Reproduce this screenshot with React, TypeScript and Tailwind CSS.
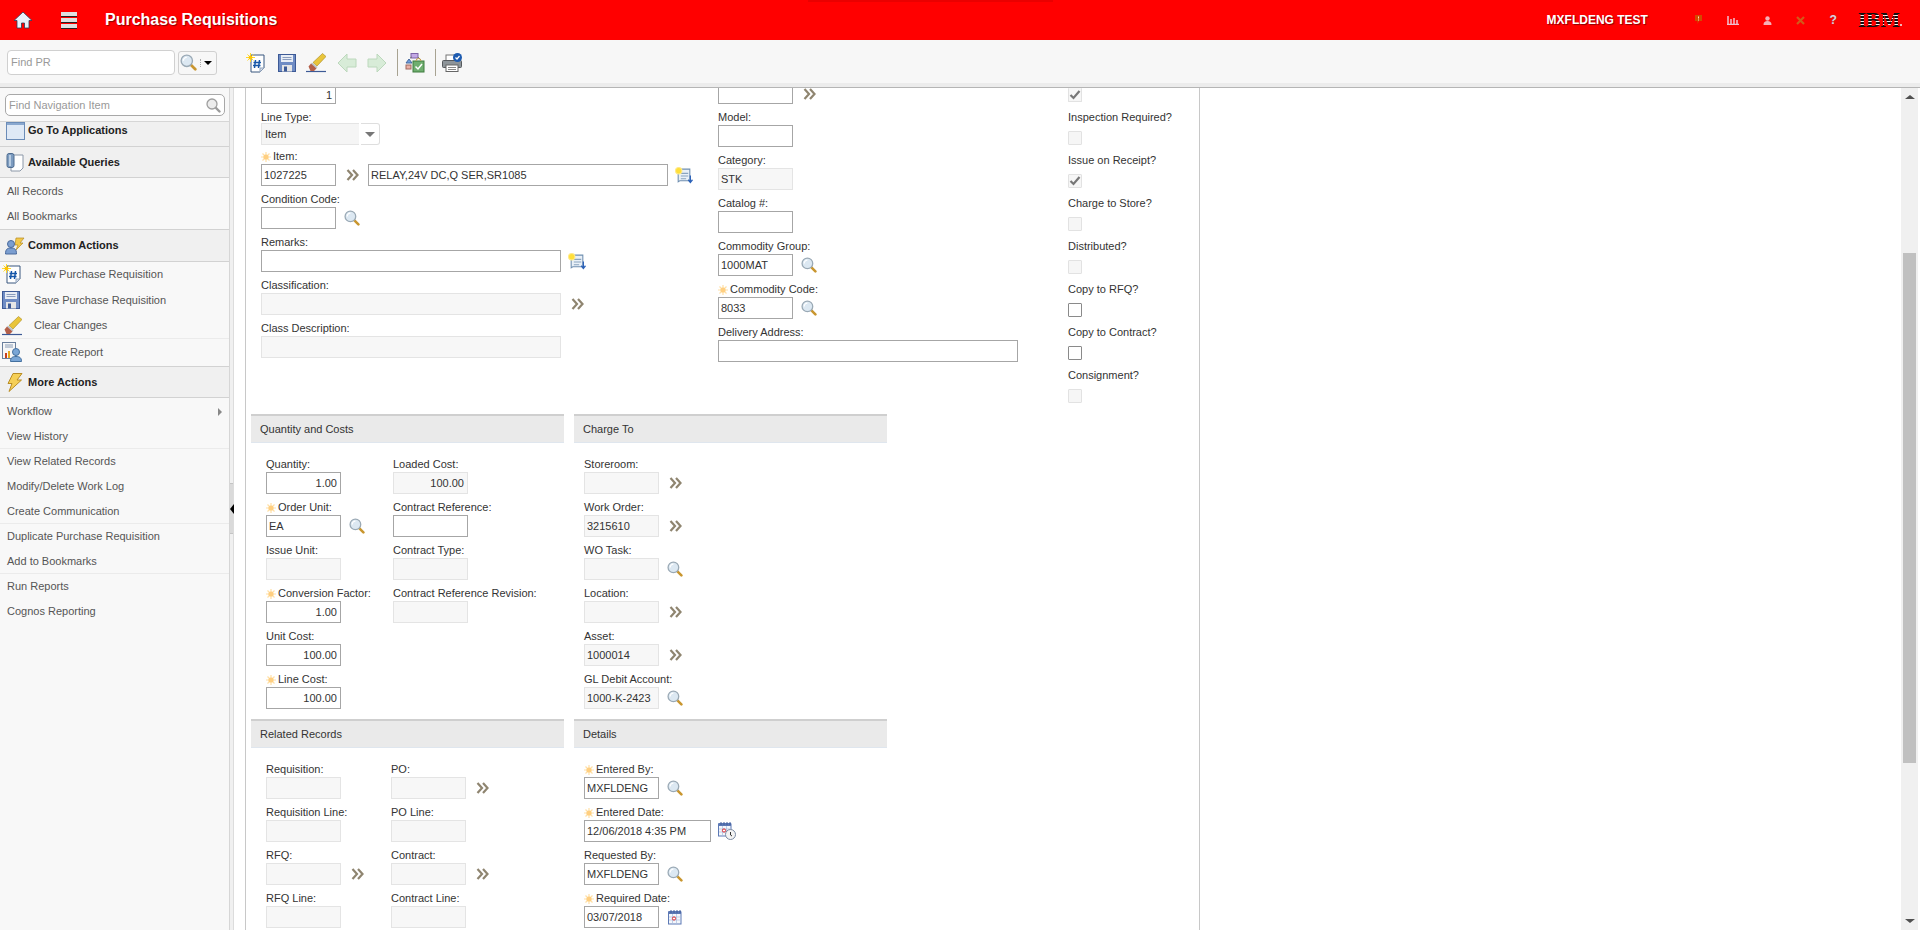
import type { ReactNode } from 'react'

const Star = () => (
  <svg width="10" height="10" viewBox="0 0 10 10" className="mr-[2px] shrink-0">
    <g stroke="#ffe0a6" strokeWidth="1.2">
      <path d="M5 0v10M0 5h10M1.5 1.5l7 7M8.5 1.5l-7 7" />
    </g>
    <circle cx="5" cy="5" r="2.6" fill="#ffcf80" />
  </svg>
)

const Arrows = () => (
  <svg width="13" height="12" viewBox="0 0 13 12" fill="none" stroke="#8f8570" strokeWidth="2.2">
    <path d="M1.5 1l4.5 5-4.5 5M7 1l4.5 5L7 11" />
  </svg>
)

const Magnifier = ({ size = 16 }: { size?: number }) => (
  <svg width={size} height={size} viewBox="0 0 15 15">
    <path d="M9.5 9.5l4 4" stroke="#c9962f" strokeWidth="2.4" strokeLinecap="round" />
    <circle cx="6" cy="6" r="5" fill="#dce8f2" stroke="#9aa9b5" strokeWidth="1.2" />
    <path d="M3 6a3 3 0 0 1 3-3" stroke="#fff" strokeWidth="1.2" fill="none" />
  </svg>
)

const GrayMagnifier = () => (
  <svg width="15" height="15" viewBox="0 0 15 15">
    <path d="M9.5 9.5l4 4" stroke="#9a9a9a" strokeWidth="2.4" strokeLinecap="round" />
    <circle cx="6" cy="6" r="5" fill="#ececec" stroke="#9f9f9f" strokeWidth="1.3" />
  </svg>
)

const LongDesc = () => (
  <svg width="18" height="17" viewBox="0 0 17 16">
    <path d="M3 2h11v11H4.5L3 14z" fill="#e9f0f7" stroke="#6f8fb0" />
    <path d="M5.500 6h7M5.500 8.500h7M5.500 11h5" stroke="#8aa4bf" />
    <path d="M14.500 8v6M12.500 12l2 2.500 2-2.500" stroke="#2c62b8" fill="none" strokeWidth="1.2" />
    <circle cx="3.500" cy="3.500" r="3" fill="#ffdf3a" stroke="#ffe98a" />
  </svg>
)

const Calendar = ({ clock }: { clock?: boolean }) => (
  <svg width={clock ? 18 : 14} height={clock ? 18 : 15} viewBox={clock ? '0 0 18 18' : '0 0 14 15'}>
    <rect x="0.5" y="2" width="12.5" height="12" fill="#f4f7fc" stroke="#5d79b5" />
    <rect x="0.5" y="1" width="12.5" height="3" fill="#5d79b5" />
    <path d="M3 0v3M6 0v3M9 0v3M12 0v3" stroke="#3f5c9c" />
    <path d="M1 7h12M1 10h12M4.5 4v10M8.5 4v10" stroke="#a9bbdc" strokeWidth="0.7" />
    <circle cx="6" cy="8.5" r="1.6" fill="#fff" stroke="#d8232a" />
    {clock && (
      <g>
        <circle cx="12.5" cy="12.5" r="5" fill="#f3f3f3" stroke="#7b8ba3" />
        <path d="M12.5 10v3l1.5 1" stroke="#333" fill="none" />
      </g>
    )}
  </svg>
)

const NewDoc = ({ size = 20 }: { size?: number }) => (
  <svg width={size} height={size} viewBox="0 0 20 20">
    <path d="M5 2h13v13l-4 4H5z" fill="#fff" stroke="#39577f" />
    <path d="M18 15h-4v4" fill="#d5dde8" stroke="#8fa2bb" />
    <path d="M9.5 7l-1 8M13.5 7l-1 8M7.5 9.5h7.5M7 12.5h7.5" stroke="#1556a8" strokeWidth="1.5" />
    <path d="M4.5 0v9M0 4.500h9M1.500 1.500l6 6M7.500 1.500l-6 6" stroke="#ffd92e" />
    <circle cx="4.500" cy="4.500" r="2" fill="#ffc400" />
  </svg>
)

const Floppy = ({ size = 18 }: { size?: number }) => (
  <svg width={size} height={size} viewBox="0 0 18 18">
    <rect x="0.500" y="0.500" width="17" height="17" fill="#6f8cc4" stroke="#3d5a96" />
    <rect x="3" y="1" width="12" height="7" fill="#e8edf5" />
    <path d="M4.500 3.500h9M4.500 5.500h9" stroke="#8a9cbd" />
    <rect x="4" y="11" width="10" height="6.500" fill="#e6e6e6" />
    <rect x="6" y="12.500" width="3" height="5" fill="#3d5a96" />
  </svg>
)

const Eraser = ({ size = 20 }: { size?: number }) => (
  <svg width={size} height={size} viewBox="0 0 20 20">
    <path d="M0 18.500h20" stroke="#3d5a96" strokeWidth="1.2" />
    <path d="M7 9.500L16.500 0.500 20 3.500 11 13z" fill="#e9c53b" stroke="#a88a1f" strokeWidth="0.6" />
    <path d="M6 9.500l5.500 4.500-1 1.500L5 11z" fill="#b9c4cc" />
    <path d="M2.500 13.500L5 10.500l5.500 5-2.500 2.500H4.500z" fill="#b4604a" />
  </svg>
)

const PageArrow = ({ dir }: { dir: 'left' | 'right' }) => (
  <svg width="20" height="20" viewBox="0 0 20 20">
    <path
      d={dir === 'left' ? 'M1 10L10 1v5h9v8h-9v5z' : 'M19 10l-9-9v5H1v8h9v5z'}
      fill="#d8ecd8"
      stroke="#bcd8bc"
    />
  </svg>
)

const RouteIcon = () => (
  <svg width="20" height="20" viewBox="0 0 20 20">
    <rect x="6" y="0.500" width="7" height="4.500" fill="#c3a9e6" stroke="#7e63a8" />
    <path d="M1 10l3-4 3 4z" fill="#6f9fe0" stroke="#46699e" />
    <rect x="1" y="12" width="5" height="4" fill="#e9b1a8" stroke="#a0695f" />
    <path d="M5 5l2-1M13 4l3 3" stroke="#777" fill="none" />
    <rect x="8" y="8" width="11" height="11" fill="#6fae6f" stroke="#3f7d3f" />
    <path d="M10.500 13.500l2.500 2.500 4-5" stroke="#fff" strokeWidth="1.5" fill="none" />
    <path d="M11 8a2.500 2.500 0 0 1 5 0" stroke="#c9a24a" fill="none" />
  </svg>
)

const PrintIcon = () => (
  <svg width="21" height="20" viewBox="0 0 21 20">
    <rect x="4" y="2" width="11" height="6" fill="#fff" stroke="#777" />
    <rect x="0.500" y="7.500" width="19" height="7" rx="1" fill="#8d9499" stroke="#55595d" />
    <rect x="4" y="12" width="12" height="6.500" fill="#fff" stroke="#666" />
    <path d="M6 14.500h8M6 16.500h8" stroke="#888" />
    <circle cx="15.500" cy="4.500" r="4.500" fill="#1d5bb0" />
    <path d="M13.500 4.500l1.500 1.500 2.500-3" stroke="#fff" strokeWidth="1.2" fill="none" />
  </svg>
)

const QueriesIcon = () => (
  <svg width="18" height="19" viewBox="0 0 18 19">
    <path d="M5 2h12v13l-3 3H5z" fill="#fff" stroke="#8c98a8" />
    <rect x="1" y="0.500" width="7" height="14" rx="2" fill="#7d9cc0" stroke="#4e6c90" />
    <rect x="3" y="2" width="2" height="11" fill="#b9cde2" />
  </svg>
)

const PeopleBolt = () => (
  <svg width="20" height="18" viewBox="0 0 20 18">
    <path d="M11 1h8l-4 5h3l-7 7 2-5h-3z" fill="#f2c84b" stroke="#b58a21" strokeWidth="0.7" />
    <circle cx="6" cy="7" r="3.500" fill="#7b9ed0" stroke="#4a6a9c" />
    <path d="M0.500 17c0-5 2-6 5.500-6s5.500 1 5.500 6z" fill="#7b9ed0" stroke="#4a6a9c" />
  </svg>
)

const Bolt = () => (
  <svg width="16" height="19" viewBox="0 0 16 19">
    <path d="M6 0.500h9L10 7h4.500L2 18.500l3-8H1z" fill="#f5cf57" stroke="#b98d25" />
  </svg>
)

const ReportIcon = () => (
  <svg width="20" height="20" viewBox="0 0 20 20">
    <rect x="0.500" y="0.500" width="13" height="16" fill="#f7f7f7" stroke="#6a7f9c" />
    <path d="M3 3h8M3 5h8" stroke="#8a9cb5" />
    <rect x="3" y="11" width="2" height="5" fill="#c8401f" />
    <rect x="6" y="9" width="2" height="7" fill="#e8a820" />
    <circle cx="14" cy="10" r="3.500" fill="#7aa6d6" stroke="#44709f" />
    <path d="M8.500 19.500c0-4 2-5 5.500-5s5.500 1 5.500 5z" fill="#7aa6d6" stroke="#44709f" />
  </svg>
)

const AppWindow = () => (
  <svg width="19" height="18" viewBox="0 0 19 18">
    <rect x="0.500" y="0.500" width="18" height="17" fill="#dfe9f6" stroke="#6b8cb8" />
    <rect x="1" y="1" width="17" height="2" fill="#8aa8cf" />
  </svg>
)

type FieldProps = {
  label: string
  value?: string
  width?: string
  required?: boolean
  right?: boolean
  readOnly?: boolean
  icon?: ReactNode
  labelClass?: string
}

function Box({ value, width = 'w-[75px]', right, readOnly, extra = 'h-[22px]' }: { value?: string; width?: string; right?: boolean; readOnly?: boolean; extra?: string }) {
  return (
    <div
      className={`${width} ${extra} shrink-0 flex items-center border pt-[1px] text-[11px] text-[#333] ${right ? 'justify-end pr-[3px]' : 'pl-[2px]'} ${readOnly ? 'border-[#e4e4e4] bg-[#f7f7f7]' : 'border-[#a6a6a6] bg-white'}`}
    >
      {value}
    </div>
  )
}

function Field({ label, value, width, required, right, readOnly, icon, labelClass = 'h-[21px] pb-[1px]' }: FieldProps) {
  return (
    <div>
      <div className={`flex items-end text-[11px] leading-[13px] text-[#333] whitespace-nowrap ${labelClass}`}>
        {required && <span className="mb-[1.5px]"><Star /></span>}
        {label}
      </div>
      <div className="flex items-center h-[22px]">
        <Box value={value} width={width} right={right} readOnly={readOnly} />
        {icon && <div className="w-[32px] flex justify-center shrink-0">{icon}</div>}
      </div>
    </div>
  )
}

function Check({ label, checked, editable }: { label: string; checked?: boolean; editable?: boolean }) {
  return (
    <div>
      <div className="flex items-end h-[21px] pb-[1px] text-[11px] leading-[13px] text-[#333] whitespace-nowrap">{label}</div>
      <div className="h-[22px] pt-[6px]">
        <CheckBox checked={checked} editable={editable} />
      </div>
    </div>
  )
}

function CheckBox({ checked, editable, clipped }: { checked?: boolean; editable?: boolean; clipped?: boolean }) {
  return (
    <div
      className={`w-[14px] h-[14px] flex items-center justify-center border rounded-[1px] ${clipped ? 'border-t-0' : ''} ${editable ? 'border-[#8a8a8a] bg-white' : 'border-[#e2e2e2] bg-[#f6f6f6]'}`}
    >
      {checked && (
        <svg width="12" height="10" viewBox="0 0 12 10" fill="none" stroke="#777" strokeWidth="2.2">
          <path d="M1.500 5l3 3 6-7" />
        </svg>
      )}
    </div>
  )
}

function SectionHead({ title }: { title: string }) {
  return (
    <div className="w-[313px] h-[29px] pl-[9px] flex items-center border-t-2 border-b border-t-[#cfcfcf] border-b-[#dfe6ee] bg-[#eaeaea] text-[11px] text-[#333]">
      {title}
    </div>
  )
}

function NavHead({ icon, title, cls }: { icon: ReactNode; title: string; cls: string }) {
  return (
    <div className={`flex items-center border-b border-[#d2d2d2] bg-[#f0f0f0] text-[11px] font-bold text-[#222] ${cls}`}>
      <div className="w-[28px] flex justify-center shrink-0 pl-[2px]">{icon}</div>
      {title}
    </div>
  )
}

function NavLink({ label, line, arrow }: { label: string; line?: boolean; arrow?: boolean }) {
  return (
    <div className={`h-[25px] pl-[7px] pr-[7px] flex items-center justify-between text-[11px] text-[#555] ${line ? 'border-b border-[#ebebeb]' : ''}`}>
      {label}
      {arrow && <span className="w-0 h-0 border-y-[4px] border-l-[4px] border-y-transparent border-l-[#888]" />}
    </div>
  )
}

function ActionLink({ icon, label, line }: { icon: ReactNode; label: string; line?: boolean }) {
  return (
    <div className={`h-[26px] flex items-center text-[11px] text-[#555] ${line ? 'border-b border-[#ebebeb]' : ''}`}>
      <div className="w-[34px] pl-[2px] shrink-0">{icon}</div>
      {label}
    </div>
  )
}

export default function App() {
  return (
    <div className="w-[1920px] h-[930px] overflow-hidden flex flex-col bg-white font-['Liberation_Sans',Arial,sans-serif]">
      <header className="relative h-[40px] shrink-0 bg-[#ff0000] flex items-center text-white">
        <div className="absolute left-[808px] top-0 w-[245px] h-[2px] bg-[#ea0000]" />
        <div className="w-[46px] pl-[13px]">
          <svg width="20" height="20" viewBox="0 0 20 20">
            <path d="M10 2L1 10.500h3V18h4.500v-5h3v5H16v-7.500h3z" fill="#eaf2fb" stroke="#2b3f5a" strokeWidth="0.8" />
          </svg>
        </div>
        <div className="ml-[15px] w-[16px] flex flex-col gap-[1px]">
          <span className="h-[5px] bg-[#e0e0e0] border-b border-[#222]" />
          <span className="h-[5px] bg-[#e0e0e0] border-b border-[#222]" />
          <span className="h-[5px] bg-[#e0e0e0] border-b border-[#222]" />
        </div>
        <div className="ml-[28px] text-[16px] font-bold [text-shadow:1px_1px_1px_#8a0000]">Purchase Requisitions</div>
        <div className="ml-auto text-[12px] font-bold [text-shadow:1px_1px_1px_#8a0000]">MXFLDENG TEST</div>
        <div className="ml-[46px] flex items-center w-[143px] justify-between">
          <svg width="9" height="10" viewBox="0 0 9 10">
            <path d="M1 0h7v6H5L3.500 9V6H1z" fill="#d24a00" />
            <path d="M4.500 1.500v2M4.500 4.500v1" stroke="#ffe0c0" />
          </svg>
          <svg width="12" height="9" viewBox="0 0 12 9" stroke="#f0c0d0" strokeWidth="1.500">
            <path d="M1 0v8M4 3v5M7 2v6M10 4v4M0 8.500h12" />
          </svg>
          <svg width="9" height="9" viewBox="0 0 9 9" fill="#f5b0b8">
            <circle cx="4.500" cy="2.500" r="2.200" />
            <path d="M0.500 9c0-3 1.500-4 4-4s4 1 4 4z" />
          </svg>
          <svg width="9" height="9" viewBox="0 0 9 9" stroke="#d25a1a" strokeWidth="2.200">
            <path d="M1 1l7 7M8 1L1 8" />
          </svg>
          <span className="text-[12px] font-bold text-[#e8c8e0] [text-shadow:0_0_1px_#663]">?</span>
        </div>
        <div className="ml-[21px] mr-[18px] flex items-end">
          <div className="text-[18px] leading-[17px] font-bold tracking-[-0.5px] font-['DejaVu_Serif',serif] text-transparent bg-clip-text bg-[repeating-linear-gradient(180deg,#f4f4f4_0px,#f4f4f4_1px,#111_1px,#111_3px)]">
            IBM
          </div>
          <span className="mb-[3px] w-[2px] h-[2px] rounded-full bg-[#eee]" />
        </div>
      </header>

      <div className="h-[48px] shrink-0 bg-[#f7f7f7] border-b border-[#b5b5b5]">
        <div className="h-[43px] pt-[2px] flex items-center">
          <div className="ml-[7px] w-[168px] h-[25px] pl-[3px] flex items-center rounded-[4px] border border-[#d0d0d0] bg-white text-[11px] text-[#999]">Find PR</div>
          <div className="ml-[3px] w-[39px] h-[24px] flex items-center rounded-[3px] border border-[#d0d0d0] pl-[1px]">
            <Magnifier size={17} />
            <span className="ml-[3px] h-[8px] border-l border-dotted border-[#aaa]" />
            <span className="ml-[3px] w-0 h-0 border-x-[4px] border-t-[4px] border-x-transparent border-t-black" />
          </div>
          <div className="ml-[29px] mt-[1px] w-[20px]"><NewDoc /></div>
          <div className="ml-[12px] mt-[1px]"><Floppy /></div>
          <div className="ml-[10px] mt-[1px]"><Eraser /></div>
          <div className="ml-[11px] mt-[1px]"><PageArrow dir="left" /></div>
          <div className="ml-[10px] mt-[1px]"><PageArrow dir="right" /></div>
          <span className="ml-[10px] h-[27px] border-l border-[#a8a392]" />
          <div className="ml-[7px] mt-[1px]"><RouteIcon /></div>
          <span className="ml-[10px] h-[27px] border-l border-[#a8a392]" />
          <div className="ml-[6px] mt-[1px]"><PrintIcon /></div>
        </div>
        <div className="h-[4px] bg-[#ececec]" />
      </div>

      <div className="flex-1 flex min-h-0">
        <aside className="relative w-[234px] shrink-0 flex border-r-0">
          <div className="w-[230px] bg-[#f8f8f8] border-r border-[#d6d6d6] flex flex-col">
            <div className="h-[34px] shrink-0 pt-[6px] pl-[5px] border-b border-[#d6d6d6]">
              <div className="w-[220px] h-[22px] pl-[3px] pr-[3px] flex items-center justify-between rounded-[5px] border border-[#a8a8a8] bg-white text-[11px] text-[#999]">
                Find Navigation Item
                <GrayMagnifier />
              </div>
            </div>
            <NavHead cls="h-[25px] pb-[7px]" icon={<AppWindow />} title="Go To Applications" />
            <NavHead cls="h-[31px]" icon={<QueriesIcon />} title="Available Queries" />
            <div className="h-[52px] pt-[1px] border-b border-[#d2d2d2]">
              <NavLink label="All Records" />
              <NavLink label="All Bookmarks" />
            </div>
            <NavHead cls="h-[32px]" icon={<PeopleBolt />} title="Common Actions" />
            <div className="-mt-[1px]">
              <ActionLink icon={<NewDoc />} label="New Purchase Requisition" />
              <ActionLink icon={<Floppy />} label="Save Purchase Requisition" />
              <ActionLink icon={<Eraser />} label="Clear Changes" line />
              <ActionLink icon={<ReportIcon />} label="Create Report" />
            </div>
            <div className="mt-[1px] h-[1px] bg-[#d2d2d2]" />
            <NavHead cls="h-[31px]" icon={<Bolt />} title="More Actions" />
            <div className="pt-[1px]">
              <NavLink label="Workflow" arrow />
              <NavLink label="View History" line />
              <NavLink label="View Related Records" />
              <NavLink label="Modify/Delete Work Log" />
              <NavLink label="Create Communication" line />
              <NavLink label="Duplicate Purchase Requisition" />
              <NavLink label="Add to Bookmarks" line />
              <NavLink label="Run Reports" />
              <NavLink label="Cognos Reporting" />
            </div>
          </div>
          <div className="w-[4px] bg-[#f0f0f0] border-r border-[#dcdcdc] pt-[395px]">
            <div className="relative h-[51px] bg-[#dadada] border-y border-[#c4c4c4]">
              <span className="absolute left-0 top-[20px] w-0 h-0 border-y-[5px] border-r-[4px] border-y-transparent border-r-black" />
            </div>
          </div>
        </aside>

        <main className="flex-1 flex min-w-0">
          <div className="ml-[11px] w-[955px] shrink-0 border-x border-[#c8c8c8] overflow-hidden">
            <div className="h-[326px] flex">
              <div className="ml-[15px] w-[457px]">
                <div className="h-[16px]">
                  <div className="w-[75px] h-[16px] pr-[3px] flex items-center justify-end border border-t-0 border-[#a6a6a6] text-[11px] text-[#333]">1</div>
                </div>
                <div className="flex items-end h-[19px] text-[11px] leading-[11px] text-[#333]">Line Type:</div>
                <div className="flex h-[22px]">
                  <div className="w-[98px] pl-[3px] pt-[1px] flex items-center border border-r-0 border-[#e4e4e4] bg-[#f5f5f5] text-[11px] text-[#333]">Item</div>
                  <div className="ml-[2px] w-[19px] flex items-center justify-center rounded-r-[3px] border border-l-0 border-[#dedede]">
                    <span className="w-0 h-0 border-x-[5px] border-t-[5px] border-x-transparent border-t-[#777]" />
                  </div>
                </div>
                <div className="flex items-end h-[19px] pb-[1px] text-[11px] leading-[13px] text-[#333]">
                  <span className="mb-[1.5px]"><Star /></span>Item:
                </div>
                <div className="flex items-center h-[22px]">
                  <Box value="1027225" />
                  <div className="w-[32px] flex justify-center shrink-0"><Arrows /></div>
                  <Box value="RELAY,24V DC,Q SER,SR1085" width="w-[300px]" />
                  <div className="w-[32px] flex justify-center shrink-0"><LongDesc /></div>
                </div>
                <Field label="Condition Code:" icon={<Magnifier />} />
                <Field label="Remarks:" width="w-[300px]" icon={<LongDesc />} />
                <Field label="Classification:" width="w-[300px]" readOnly icon={<Arrows />} />
                <Field label="Class Description:" width="w-[300px]" readOnly />
              </div>
              <div className="w-[350px]">
                <div className="h-[16px] flex">
                  <div className="w-[75px] h-[16px] border border-t-0 border-[#a6a6a6]" />
                  <div className="w-[32px] h-[10px] flex justify-center"><Arrows /></div>
                </div>
                <Field label="Model:" />
                <Field label="Category:" value="STK" readOnly />
                <Field label="Catalog #:" />
                <Field label="Commodity Group:" value="1000MAT" icon={<Magnifier />} />
                <Field label="Commodity Code:" value="8033" required icon={<Magnifier />} />
                <Field label="Delivery Address:" width="w-[300px]" />
              </div>
              <div className="w-[120px]">
                <div className="h-[16px]"><CheckBox checked clipped /></div>
                <Check label="Inspection Required?" />
                <Check label="Issue on Receipt?" checked />
                <Check label="Charge to Store?" />
                <Check label="Distributed?" />
                <Check label="Copy to RFQ?" editable />
                <Check label="Copy to Contract?" editable />
                <Check label="Consignment?" />
              </div>
            </div>

            <div className="ml-[5px] grid grid-cols-[323px_1fr]">
              <section className="h-[305px]">
                <SectionHead title="Quantity and Costs" />
                <div className="mt-[8px] ml-[15px] grid grid-cols-[127px_1fr]">
                  <div>
                    <Field label="Quantity:" value="1.00" right />
                    <Field label="Order Unit:" value="EA" required icon={<Magnifier />} />
                    <Field label="Issue Unit:" readOnly />
                    <Field label="Conversion Factor:" value="1.00" required right />
                    <Field label="Unit Cost:" value="100.00" right />
                    <Field label="Line Cost:" value="100.00" required right />
                  </div>
                  <div>
                    <Field label="Loaded Cost:" value="100.00" right readOnly />
                    <Field label="Contract Reference:" />
                    <Field label="Contract Type:" readOnly />
                    <Field label="Contract Reference Revision:" readOnly />
                  </div>
                </div>
              </section>
              <section className="h-[305px]">
                <SectionHead title="Charge To" />
                <div className="mt-[8px] ml-[10px]">
                  <Field label="Storeroom:" readOnly icon={<Arrows />} />
                  <Field label="Work Order:" value="3215610" readOnly icon={<Arrows />} />
                  <Field label="WO Task:" readOnly icon={<Magnifier />} />
                  <Field label="Location:" readOnly icon={<Arrows />} />
                  <Field label="Asset:" value="1000014" readOnly icon={<Arrows />} />
                  <Field label="GL Debit Account:" value="1000-K-2423" readOnly icon={<Magnifier />} />
                </div>
              </section>
              <section>
                <SectionHead title="Related Records" />
                <div className="mt-[8px] ml-[15px] grid grid-cols-[125px_1fr]">
                  <div>
                    <Field label="Requisition:" readOnly />
                    <Field label="Requisition Line:" readOnly />
                    <Field label="RFQ:" readOnly icon={<Arrows />} />
                    <Field label="RFQ Line:" readOnly />
                  </div>
                  <div>
                    <Field label="PO:" readOnly icon={<Arrows />} />
                    <Field label="PO Line:" readOnly />
                    <Field label="Contract:" readOnly icon={<Arrows />} />
                    <Field label="Contract Line:" readOnly />
                  </div>
                </div>
              </section>
              <section>
                <SectionHead title="Details" />
                <div className="mt-[8px] ml-[10px]">
                  <Field label="Entered By:" value="MXFLDENG" required icon={<Magnifier />} />
                  <Field label="Entered Date:" value="12/06/2018 4:35 PM" width="w-[127px]" required icon={<Calendar clock />} />
                  <Field label="Requested By:" value="MXFLDENG" icon={<Magnifier />} />
                  <Field label="Required Date:" value="03/07/2018" required icon={<Calendar />} />
                </div>
              </section>
            </div>
          </div>

          <div className="ml-auto mr-[2px] w-[17px] shrink-0 bg-[#f0f0f0] flex flex-col items-center">
            <span className="mt-[7px] w-0 h-0 border-x-[5px] border-b-[4px] border-x-transparent border-b-[#505050]" />
            <div className="mt-[154px] w-[13px] h-[510px] bg-[#c0c0c0]" />
            <span className="mt-auto mb-[7px] w-0 h-0 border-x-[5px] border-t-[4px] border-x-transparent border-t-[#505050]" />
          </div>
        </main>
      </div>
    </div>
  )
}
